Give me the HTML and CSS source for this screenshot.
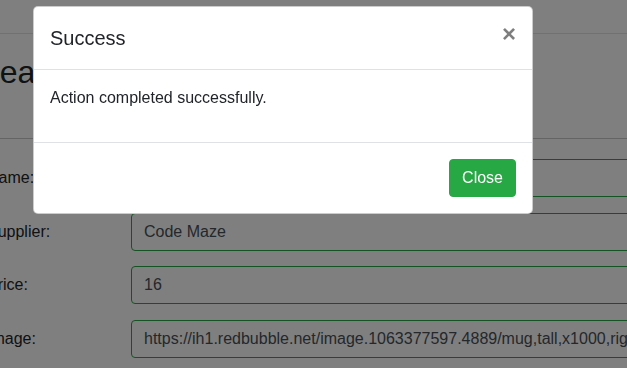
FILE: index.html
```html
<!DOCTYPE html>
<html lang="en">
<head>
<meta charset="utf-8">
<title>Create Product</title>
<link rel="stylesheet" href="styles.css">
</head>
<body>
<div class="page">
  <header class="navbar"></header>
  <main class="content">
    <h2 class="title">Create Product</h2>
    <hr class="divider">
    <form class="form">
      <label class="label">Name:</label>
      <input class="input" type="text" value="Code Maze Mug">
      <label class="label">Supplier:</label>
      <input class="input" type="text" value="Code Maze">
      <label class="label">Price:</label>
      <input class="input" type="text" value="16">
      <label class="label">Image:</label>
      <input class="input" type="text" value="https://ih1.redbubble.net/image.1063377597.4889/mug,tall,x1000,right.u2.jpg">
    </form>
  </main>
</div>
<div class="backdrop"></div>
<div class="modal">
  <div class="modal-header">
    <h5 class="modal-title">Success</h5>
    <button class="close" type="button">&times;</button>
  </div>
  <div class="modal-body">
    <p class="message">Action completed successfully.</p>
  </div>
  <div class="modal-footer">
    <button class="btn-success" type="button">Close</button>
  </div>
</div>
</body>
</html>
```

FILE: styles.css
```css
* { box-sizing: border-box; }
html, body {
  margin: 0;
  padding: 0;
  overflow: hidden;
  width: 627px;
  height: 368px;
  background: #fff;
  font-family: "Liberation Sans", Arial, sans-serif;
  font-size: 16px;
  line-height: 1.5;
  color: #212529;
}
.page {
  width: 900px;
  margin-left: -34px;
}
.navbar {
  height: 34px;
  border-bottom: 1px solid #dee2e6;
  background: #fff;
}
.content {
  padding: 0;
}
.title {
  margin: 19px 0 0 0;
  font-size: 32px;
  font-weight: 400;
  line-height: 1.2;
}
.divider {
  margin: 46.6px 0 20px 0;
  border: 0;
  border-top: 1px solid #c8c8c8;
  height: 0;
}
.form {
  display: grid;
  grid-template-columns: 144px 760px;
  row-gap: 15.7px;
  padding-left: 21px;
}
.label {
  line-height: 24px;
  padding-top: 7px;
}
.input {
  height: 38px;
  padding: 6px 12px;
  font-family: inherit;
  font-size: 16px;
  line-height: 1.5;
  color: #495057;
  background: #fff;
  border: 1px solid #28a745;
  border-radius: 4px;
}
.backdrop {
  position: fixed;
  inset: 0;
  background: rgba(0, 0, 0, 0.5);
}
.modal {
  position: absolute;
  top: 6px;
  left: 33px;
  width: 500px;
  background: #fff;
  border: 1px solid rgba(0, 0, 0, 0.2);
  border-radius: 5px;
}
.modal-header {
  display: flex;
  align-items: flex-start;
  justify-content: space-between;
  padding: 16px;
  border-bottom: 1px solid #dee2e6;
}
.modal-title {
  margin: 0;
  font-size: 20px;
  font-weight: 400;
  line-height: 1.5;
}
.close {
  padding: 15px 16px 17px;
  margin: -16px -16px -16px auto;
  background: transparent;
  border: 0;
  font-family: inherit;
  font-size: 24px;
  font-weight: 700;
  line-height: 1;
  color: #000;
  opacity: 0.5;
  text-shadow: 0 1px 0 #fff;
  cursor: pointer;
}
.modal-body {
  padding: 16px;
}
.message {
  margin: 0 0 16px 0;
}
.modal-footer {
  display: flex;
  justify-content: flex-end;
  align-items: center;
  padding: 12px;
  border-top: 1px solid #dee2e6;
}
.btn-success {
  margin: 4px;
  padding: 6px 12px;
  font-family: inherit;
  font-size: 16px;
  line-height: 1.5;
  color: #fff;
  background: #28a745;
  border: 1px solid #28a745;
  border-radius: 4px;
}
```
